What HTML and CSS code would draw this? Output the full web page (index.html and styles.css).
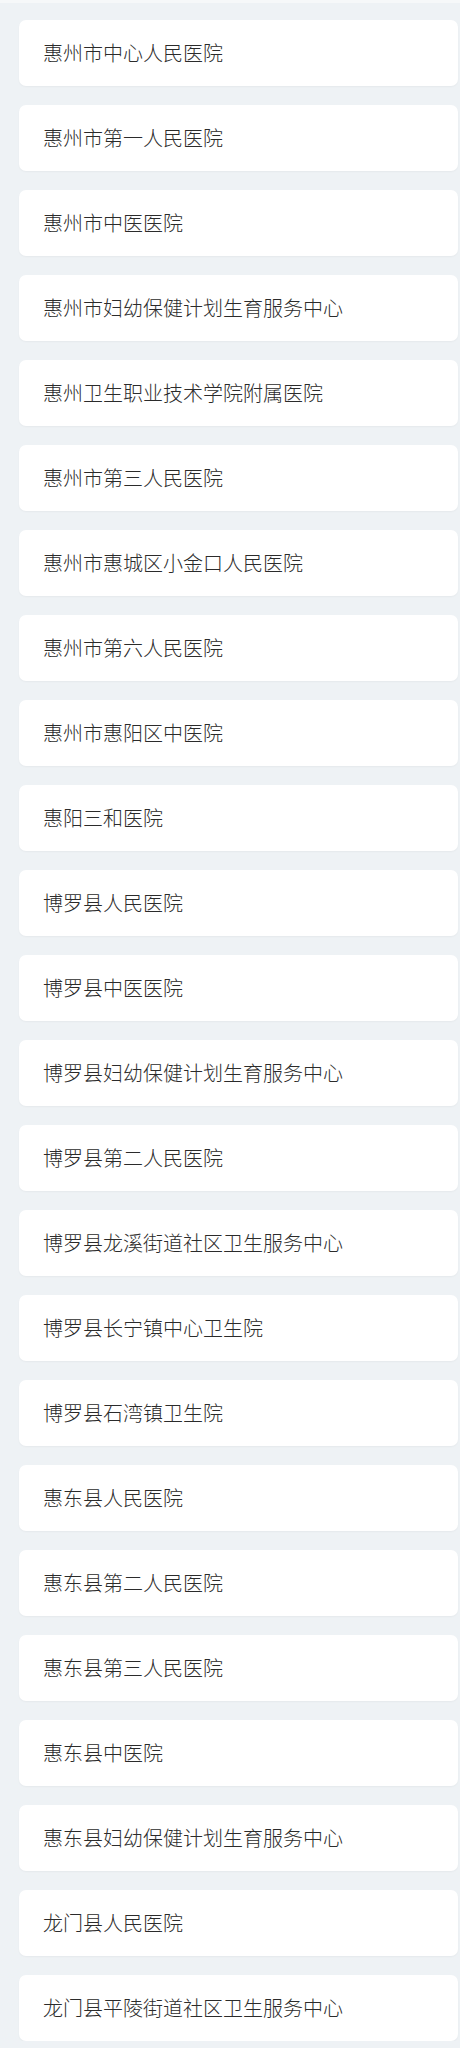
FILE: index.html
```html
<!DOCTYPE html>
<html lang="zh">
<head>
<meta charset="utf-8">
<link rel="stylesheet" href="styles.css">
</head>
<body>
<div class="topbar"></div>
<ul class="list">
<li class="card">惠州市中心人民医院</li>
<li class="card">惠州市第一人民医院</li>
<li class="card">惠州市中医医院</li>
<li class="card">惠州市妇幼保健计划生育服务中心</li>
<li class="card">惠州卫生职业技术学院附属医院</li>
<li class="card">惠州市第三人民医院</li>
<li class="card">惠州市惠城区小金口人民医院</li>
<li class="card">惠州市第六人民医院</li>
<li class="card">惠州市惠阳区中医院</li>
<li class="card">惠阳三和医院</li>
<li class="card">博罗县人民医院</li>
<li class="card">博罗县中医医院</li>
<li class="card">博罗县妇幼保健计划生育服务中心</li>
<li class="card">博罗县第二人民医院</li>
<li class="card">博罗县龙溪街道社区卫生服务中心</li>
<li class="card">博罗县长宁镇中心卫生院</li>
<li class="card">博罗县石湾镇卫生院</li>
<li class="card">惠东县人民医院</li>
<li class="card">惠东县第二人民医院</li>
<li class="card">惠东县第三人民医院</li>
<li class="card">惠东县中医院</li>
<li class="card">惠东县妇幼保健计划生育服务中心</li>
<li class="card">龙门县人民医院</li>
<li class="card">龙门县平陵街道社区卫生服务中心</li>
</ul>
</body>
</html>
```
FILE: styles.css
```css
html, body {
  margin: 0;
  padding: 0;
  background: #eef2f5;
}
body {
  font-family: "Noto Sans CJK SC", "Noto Sans", sans-serif;
  color: #2b2b2b;
}
.topbar {
  height: 3px;
  background: #f6f8f9;
}
.list {
  list-style: none;
  margin: 0;
  padding: 17px 2px 0 19px;
  display: flex;
  flex-direction: column;
  gap: 19px;
}
.card {
  background: #fff;
  border-radius: 7px;
  height: 66px;
  box-sizing: border-box;
  padding: 0 24px;
  display: flex;
  align-items: center;
  font-size: 20px;
  font-weight: 300;
  line-height: 1;
  box-shadow: 0 1px 2px rgba(0, 0, 0, 0.04);
}
```
